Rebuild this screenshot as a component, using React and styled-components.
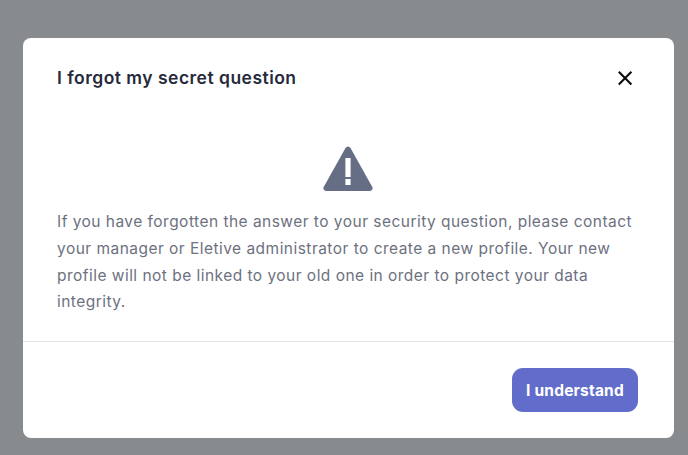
import styled, { createGlobalStyle } from "styled-components";

const Global = createGlobalStyle`
    html, body {
        margin: 0;
        padding: 0;
        background: #888b8e;
    }
    * {
        box-sizing: border-box;
    }
`
const Overlay = styled("div")`
    width: 688px;
    height: 455px;
    padding: 38px 14px 17px 23px;
    background: #888b8e;
    overflow: hidden;
    font-family: Inter, "Noto Sans", sans-serif;
`
const Modal = styled("div")`
    width: 651px;
    height: 400px;
    background: #fff;
    border-radius: 8px;
    display: flex;
    flex-direction: column;
`
const Header = styled("div")`
    height: 78px;
    padding: 0 41px 0 34px;
    display: flex;
    align-items: center;
    justify-content: space-between;
`
const Title = styled("h2")`
    margin: 0;
    font-size: 17.5px;
    font-weight: 600;
    letter-spacing: 0.48px;
    color: #262a3b;
`
const CloseButton = styled("button")`
    border: 0;
    margin-top: 2px;
    padding: 0;
    background: none;
    width: 16px;
    height: 16px;
    display: flex;
`
const Body = styled("div")`
    flex: 1;
    padding: 29px 34px 0;
    display: flex;
    flex-direction: column;
    align-items: center;
    border-bottom: 1px solid #e1e3e7;
`
const WarningIcon = styled("svg")`
    width: 50px;
    height: 46px;
    margin-right: 1px;
    margin-bottom: 18.4px;
`
const Message = styled("p")`
    margin: 0;
    font-size: 15.5px;
    line-height: 26.6px;
    letter-spacing: 0.47px;
    color: #6d7180;
`
const Footer = styled("div")`
    height: 96px;
    padding: 26px 36px 0 0;
    display: flex;
    justify-content: flex-end;
    align-items: flex-start;
`
const PrimaryButton = styled("button")`
    width: 126px;
    height: 44px;
    padding: 0;
    border: 0;
    border-radius: 11px;
    background: #626dcb;
    color: #fff;
    font-family: inherit;
    font-size: 15.5px;
    font-weight: 700;
    letter-spacing: 0.2px;
`

export default function App() {
    return (
        <Overlay>
            <Global />
            <Modal>
                <Header>
                    <Title>I forgot my secret question</Title>
                    <CloseButton aria-label="Close">
                        <svg viewBox="0 0 16 16" width="16" height="16">
                            <path d="M1.8 1.8 L14.4 14.4 M14.4 1.8 L1.8 14.4" stroke="#0b0b10" strokeWidth="2.1" fill="none" />
                        </svg>
                    </CloseButton>
                </Header>
                <Body>
                    <WarningIcon viewBox="0 0 50 46">
                        <path
                            d="M25 1.5 Q26.5 1.5 27.5 3 L49.3 42 Q50.5 45.5 47 46 L3 46 Q-0.5 45.5 0.7 42 L22.5 3 Q23.5 1.5 25 1.5 Z"
                            fill="#666e86"
                        />
                        <rect x="22.4" y="13" width="5.2" height="19" fill="#fff" />
                        <rect x="22.4" y="34" width="5.2" height="6" fill="#fff" />
                    </WarningIcon>
                    <Message>
                        If you have forgotten the answer to your security question, please contact
                        your manager or Eletive administrator to create a new profile. Your new
                        profile will not be linked to your old one in order to protect your data
                        integrity.
                    </Message>
                </Body>
                <Footer>
                    <PrimaryButton>I understand</PrimaryButton>
                </Footer>
            </Modal>
        </Overlay>
    );
}
